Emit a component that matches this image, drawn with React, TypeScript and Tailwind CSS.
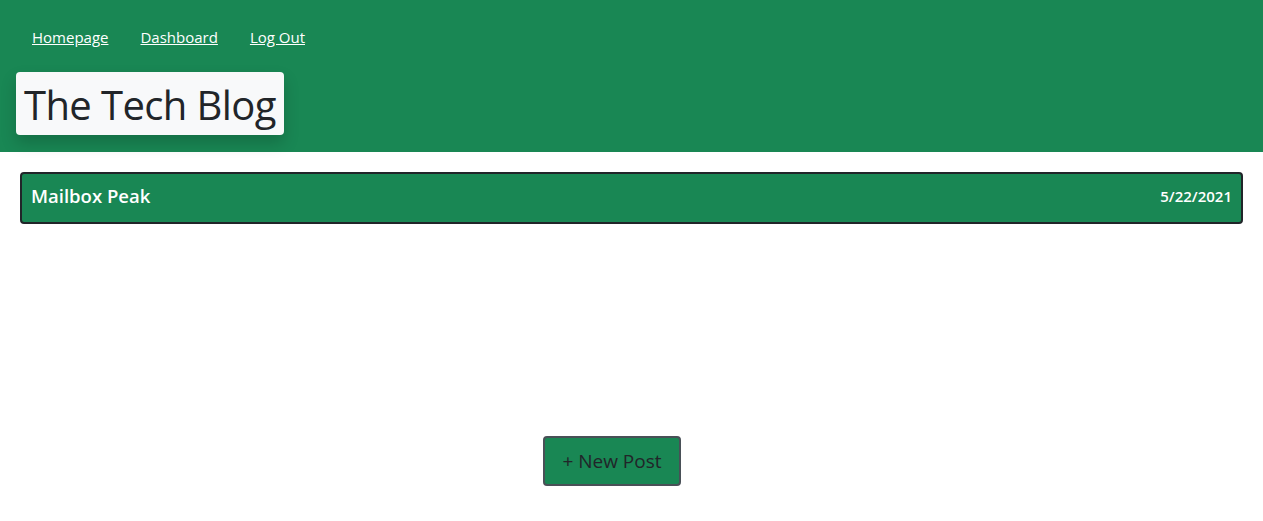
export default function App() {
  return (
    <div className="min-h-[521px] bg-white font-['Open_Sans',sans-serif] text-[#212529]">
      <header className="h-[152px] bg-[#198754] px-4 pt-[26px]">
        <nav className="flex gap-8 pl-4 text-[15px]">
          <a href="#" className="text-white underline">Homepage</a>
          <a href="#" className="text-white underline">Dashboard</a>
          <a href="#" className="text-white underline">Log Out</a>
        </nav>
        <div className="mt-[23px] inline-block rounded bg-[#f8f9fa] px-2 pt-[3px] shadow-[0_8px_16px_rgba(0,0,0,0.18)]">
          <h1 className="text-[40px] font-medium leading-[60px] tracking-[-0.6px]">The Tech Blog</h1>
        </div>
      </header>
      <main className="px-5 pt-5">
        <div className="flex h-[52px] items-center justify-between rounded border-2 border-[#212529] bg-[#198754] px-[9px] pb-1 text-white">
          <h2 className="text-[18.5px] font-semibold">Mailbox Peak</h2>
          <span className="text-[15px] font-semibold">5/22/2021</span>
        </div>
        <div className="ml-[523px] mt-[212px]">
          <button className="h-[50px] w-[138px] rounded border-2 border-[#495057] bg-[#198754] text-[19px] text-[#212529]">
            + New Post
          </button>
        </div>
      </main>
    </div>
  );
}
